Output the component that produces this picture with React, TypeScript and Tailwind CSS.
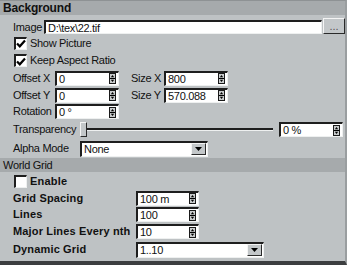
import React from "react";

const sunken =
  "bg-white border-t-2 border-l-2 border-r border-b border-t-[#1e1e1e] border-l-[#1e1e1e] border-r-[#eef0f0] border-b-[#eef0f0]";
const raised =
  "bg-[#c3c7c9] border border-t-[#f4f4f4] border-l-[#f4f4f4] border-r-[#2a2a2a] border-b-[#2a2a2a]";

const Spinner = () => (
  <svg width="7" height="11" viewBox="0 0 7 11" className="shrink-0">
    <rect x="0.5" y="0.5" width="6" height="10" fill="#c9cccd" stroke="#1a1a1a" />
    <path d="M3.5 2 L5.2 4.2 L1.8 4.2 Z" fill="#000" />
    <line x1="1" y1="5.5" x2="6" y2="5.5" stroke="#000" />
    <path d="M1.8 6.8 L5.2 6.8 L3.5 9 Z" fill="#000" />
  </svg>
);

const NumField = ({ value, w }: { value: string; w: string }) => (
  <div className={`${sunken} ${w} h-[15px] flex items-center pl-[2px] pr-[2px]`}>
    <span className="flex-1 leading-[12px] tracking-[-0.3px]">{value}</span>
    <Spinner />
  </div>
);

const SelectField = ({ value, w }: { value: string; w: string }) => (
  <div className={`${sunken} ${w} h-[16px] flex items-center pl-[2px] pr-[1px]`}>
    <span className="flex-1 leading-[12px] tracking-[-0.3px]">{value}</span>
    <div className={`${raised} w-[15px] h-[12px] flex items-center justify-center`}>
      <svg width="7" height="4" viewBox="0 0 7 4">
        <path d="M0 0 L7 0 L3.5 4 Z" fill="#000" />
      </svg>
    </div>
  </div>
);

const Check = ({ checked }: { checked: boolean }) => (
  <div className={`${sunken} w-[13px] h-[13px] flex items-center justify-center`}>
    {checked && (
      <svg width="10" height="9" viewBox="0 0 10 9">
        <path d="M1 4.5 L3.8 7.3 L9 1.5" stroke="#000" strokeWidth="2.2" fill="none" />
      </svg>
    )}
  </div>
);

const Label = ({ children, w }: { children: React.ReactNode; w: string }) => (
  <span className={`${w} shrink-0 tracking-[-0.3px] leading-[13px]`}>{children}</span>
);

const BoldLabel = ({ children }: { children: React.ReactNode }) => (
  <span className="w-[123px] shrink-0 font-bold tracking-[0.15px] leading-[13px]">{children}</span>
);

export default function App() {
  return (
    <div className="w-[347px] h-[265px] bg-[#bec2c4] text-[11px] text-[#111] font-['Liberation_Sans',Arial,sans-serif] flex flex-col border-t border-t-[#8e9294] border-r-2 border-r-[#9a9ea0] border-b-4 border-b-[#3c3e40] overflow-hidden">
      {/* Background section */}
      <div className="h-[14px] bg-[#a6aaac] pl-[3px] text-[12px] font-bold leading-[14px] tracking-[-0.2px]">
        Background
      </div>

      <div className="h-[19px] flex items-end pl-[13px]">
        <Label w="w-[31px]">Image</Label>
        <div className={`${sunken} w-[278px] h-[14px] flex items-center pl-[2px]`}>
          <span className="leading-[12px] tracking-[-0.3px]">D:\tex\22.tif</span>
        </div>
        <div className={`${raised} ml-[1px] w-[22px] h-[16px] flex items-center justify-center text-[#555] leading-[10px]`}>
          ...
        </div>
      </div>

      <div className="h-[18px] flex items-center pl-[14px] gap-[3px]">
        <Check checked />
        <Label w="w-auto">Show Picture</Label>
      </div>
      <div className="h-[17px] flex items-center pl-[14px] gap-[3px]">
        <Check checked />
        <Label w="w-auto">Keep Aspect Ratio</Label>
      </div>

      <div className="h-[18px] flex items-center pl-[13px]">
        <Label w="w-[42px]">Offset X</Label>
        <NumField value="0" w="w-[64px]" />
        <span className="ml-[12px] w-[33px] shrink-0 tracking-[-0.3px]">Size X</span>
        <NumField value="800" w="w-[64px]" />
      </div>
      <div className="h-[16px] flex items-center pl-[13px]">
        <Label w="w-[42px]">Offset Y</Label>
        <NumField value="0" w="w-[64px]" />
        <span className="ml-[12px] w-[33px] shrink-0 tracking-[-0.3px]">Size Y</span>
        <NumField value="570.088" w="w-[64px]" />
      </div>
      <div className="h-[17px] flex items-center pl-[13px]">
        <Label w="w-[42px]">Rotation</Label>
        <NumField value="0 °" w="w-[64px]" />
      </div>

      <div className="h-[19px] flex items-center pl-[13px]">
        <Label w="w-[67px]">Transparency</Label>
        <div className="w-[193px] h-[15px] flex items-center">
          <div className={`${raised} w-[7px] h-[15px] shrink-0`} />
          <div className="flex-1 flex flex-col">
            <div className="h-[2px] bg-[#1e1e1e]" />
            <div className="h-[1px] bg-[#eef0f0]" />
          </div>
        </div>
        <div className="ml-[6px]">
          <NumField value="0 %" w="w-[64px]" />
        </div>
      </div>

      <div className="h-[19px] flex items-center pl-[13px]">
        <Label w="w-[67px]">Alpha Mode</Label>
        <SelectField value="None" w="w-[128px]" />
      </div>

      {/* World Grid section */}
      <div className="h-[14px] bg-[#a6aaac] pl-[3px] leading-[14px] tracking-[-0.3px]">World Grid</div>

      <div className="h-[18px] flex items-center pl-[14px] gap-[3px]">
        <Check checked={false} />
        <span className="font-bold tracking-[0.2px] leading-[13px]">Enable</span>
      </div>

      <div className="h-[16px] flex items-center pl-[13px]">
        <BoldLabel>Grid Spacing</BoldLabel>
        <NumField value="100 m" w="w-[63px]" />
      </div>
      <div className="h-[17px] flex items-center pl-[13px]">
        <BoldLabel>Lines</BoldLabel>
        <NumField value="100" w="w-[63px]" />
      </div>
      <div className="h-[17px] flex items-center pl-[13px]">
        <BoldLabel>Major Lines Every nth</BoldLabel>
        <NumField value="10" w="w-[63px]" />
      </div>
      <div className="h-[19px] flex items-center pl-[13px]">
        <BoldLabel>Dynamic Grid</BoldLabel>
        <SelectField value="1..10" w="w-[128px]" />
      </div>
    </div>
  );
}
